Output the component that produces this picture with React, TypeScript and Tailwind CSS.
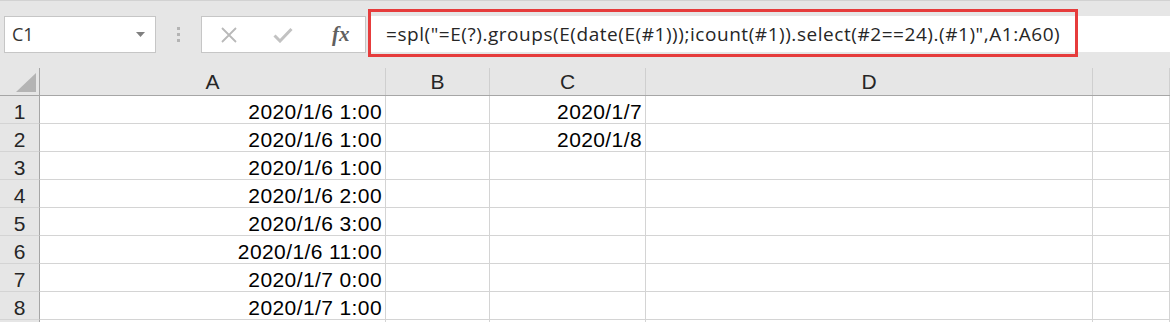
import React from 'react';

const COLS = ['A', 'B', 'C', 'D', ''];

const ROWS: string[][] = [
  ['2020/1/6 1:00', '', '2020/1/7', '', ''],
  ['2020/1/6 1:00', '', '2020/1/8', '', ''],
  ['2020/1/6 1:00', '', '', '', ''],
  ['2020/1/6 2:00', '', '', '', ''],
  ['2020/1/6 3:00', '', '', '', ''],
  ['2020/1/6 11:00', '', '', '', ''],
  ['2020/1/7 0:00', '', '', '', ''],
  ['2020/1/7 1:00', '', '', '', ''],
  ['', '', '', '', ''],
];

const FORMULA = '=spl("=E(?).groups(E(date(E(#1)));icount(#1)).select(#2==24).(#1)",A1:A60)';

const gridCols = 'grid grid-cols-[40px_346px_104px_156px_447px_1fr]';

function FormulaBar() {
  return (
    <div className="flex h-[68px] items-start border-t border-[#d2d2d2] pt-[15px]">
      {/* name box */}
      <div className="ml-[4px] flex h-[37px] w-[152px] items-center justify-between border border-[#c6c6c6] bg-white pl-[7px] pr-[10px]">
        <span className="font-['Open_Sans',sans-serif] text-[18px] text-[#333]">C1</span>
        <svg width="9" height="5" viewBox="0 0 9 5">
          <path d="M0 0h9L4.5 5z" fill="#808080" />
        </svg>
      </div>
      <div className="flex h-[37px] w-[45px] flex-col items-center justify-center gap-[3px]">
        <span className="h-[3px] w-[3px] bg-[#b4b4b4]" />
        <span className="h-[3px] w-[3px] bg-[#b4b4b4]" />
        <span className="h-[3px] w-[3px] bg-[#b4b4b4]" />
      </div>
      {/* cancel / enter / fx */}
      <div className="flex h-[37px] w-[165px] items-center border border-[#c6c6c6] bg-white">
        <div className="flex w-[55px] justify-center">
          <svg width="18" height="18" viewBox="0 0 18 18">
            <path d="M2 2l14 14M16 2L2 16" stroke="#b9b9b9" strokeWidth="1.8" />
          </svg>
        </div>
        <div className="flex w-[55px] justify-center">
          <svg width="20" height="16" viewBox="0 0 20 16">
            <path d="M1.5 8.5l5.5 5.5L18.5 2" stroke="#c2c2c2" strokeWidth="3" fill="none" />
          </svg>
        </div>
        <div className="flex w-[55px] justify-center pl-[6px]">
          <span className="font-['Liberation_Serif',serif] text-[21px] font-bold italic leading-none text-[#606060]">fx</span>
        </div>
      </div>
      {/* formula input */}
      <div className="relative ml-[2px] flex h-[36px] flex-1 items-center bg-white pl-[18px]">
        <span className="whitespace-nowrap font-['Open_Sans',sans-serif] text-[19px] tracking-[0.55px] text-[#262626]">{FORMULA}</span>
        <div className="absolute left-0 top-[-7px] h-[48px] w-[710px] border-[3px] border-[#e63c3c]" />
      </div>
    </div>
  );
}

export default function App() {
  return (
    <div className="h-[322px] w-[1170px] overflow-hidden bg-[#e6e6e6] font-['Liberation_Sans',Arial,sans-serif]">
      <FormulaBar />

      {/* column headers */}
      <div className={`${gridCols} h-[28px] border-b border-[#a6a6a6]`}>
        <div className="relative border-r border-[#a6a6a6]">
          <svg className="absolute left-[16px] top-[5px]" width="20" height="19" viewBox="0 0 20 19">
            <path d="M20 0v19H0z" fill="#b4b4b4" />
          </svg>
        </div>
        {COLS.map((c, i) => (
          <div key={i} className="border-r border-[#cfcfcf] pt-[3px] text-center text-[21px] leading-[21px] text-[#262626]">
            {c}
          </div>
        ))}
      </div>

      {/* rows */}
      {ROWS.map((row, r) => (
        <div key={r} className={`${gridCols} h-[28px]`}>
          <div className="border-b border-r border-b-[#d4d4d4] border-r-[#a6a6a6] pt-[5px] text-center text-[21px] leading-[21px] text-[#262626]">
            {r < 8 ? r + 1 : ''}
          </div>
          {row.map((v, i) => (
            <div
              key={i}
              className="overflow-hidden whitespace-nowrap border-b border-r border-[#d4d4d4] bg-white pr-[3px] pt-[5px] text-right text-[21px] leading-[21px] tracking-[0.4px] text-black"
            >
              {v}
            </div>
          ))}
        </div>
      ))}
    </div>
  );
}
